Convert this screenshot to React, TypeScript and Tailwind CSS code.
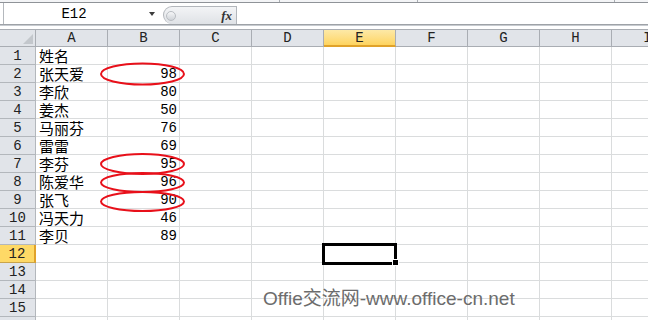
import React from "react";

type Row = { name?: string; score?: number };

const cols = ["A", "B", "C", "D", "E", "F", "G", "H", "I"];

const rows: Row[] = [
  { name: "姓名" },
  { name: "张天爱", score: 98 },
  { name: "李欣", score: 80 },
  { name: "姜杰", score: 50 },
  { name: "马丽芬", score: 76 },
  { name: "雷雷", score: 69 },
  { name: "李芬", score: 95 },
  { name: "陈爱华", score: 96 },
  { name: "张飞", score: 90 },
  { name: "冯天力", score: 46 },
  { name: "李贝", score: 89 },
  {},
  {},
  {},
  {},
  {},
];

const mono = { fontFamily: '"Liberation Mono", "Noto Sans CJK SC", monospace' };
const cjk = { fontFamily: '"Noto Sans CJK SC", "Liberation Sans", sans-serif' };

function FormulaBar() {
  return (
    <div className="flex h-[21px] items-stretch">
      {/* name box */}
      <div className="ml-[3px] flex w-[157px] items-center border-l border-[#b4b8bd]">
        <span className="w-[140px] text-center text-[14px] leading-none text-black" style={mono}>
          E12
        </span>
        <span className="ml-[5px] h-0 w-0 border-x-[3px] border-t-[4px] border-x-transparent border-t-[#3c3c3c]" />
      </div>
      {/* fx pill */}
      <div className="ml-[3px] mt-[3px] flex w-[74px] items-center rounded-l-full border-l border-t border-r border-[#b2b6bb] bg-gradient-to-b from-[#f3f4f6] to-[#dfe2e6]">
        <span className="ml-[2px] h-[10px] w-[10px] rounded-full border border-[#b9bdc2] bg-gradient-to-b from-[#f6f7f8] to-[#cfd3d8]" />
        <span
          className="ml-auto mr-[4px] text-[13px] font-bold italic leading-none text-[#333]"
          style={{ fontFamily: '"Liberation Serif", serif' }}
        >
          fx
        </span>
      </div>
      <div className="flex-1 bg-white" />
    </div>
  );
}

function Sheet() {
  return (
    <div>
      {/* column headers */}
      <div className="flex h-[18px] border-t border-[#a9adb3] bg-[#e1e4e9]">
        <div className="relative w-[36px] shrink-0 border-b border-r border-[#a9adb3]">
          <span className="absolute bottom-[2px] right-[2px] h-0 w-0 border-b-[10px] border-l-[10px] border-b-[#c3c7cc] border-l-transparent" />
        </div>
        {cols.map((c) =>
          c === "E" ? (
            <div
              key={c}
              className="flex w-[72px] shrink-0 items-center justify-center border-b-2 border-r border-b-[#e0a22a] border-r-[#a9adb3] bg-gradient-to-b from-[#fde9a6] to-[#fed45e] text-[14px] leading-none text-[#222]"
              style={mono}
            >
              {c}
            </div>
          ) : (
            <div
              key={c}
              className="flex w-[72px] shrink-0 items-center justify-center border-b border-r border-[#a9adb3] text-[14px] leading-none text-[#222]"
              style={mono}
            >
              {c}
            </div>
          )
        )}
      </div>

      {rows.map((r, i) => {
        const n = i + 1;
        const active = n === 12;
        return (
          <div key={n} className="flex h-[18px]">
            <div
              className={
                active
                  ? "flex w-[36px] shrink-0 items-center justify-center border-b border-r-2 border-b-[#c9a44a] border-r-[#e0a22a] bg-[#fed966] text-[14px] leading-none text-[#222]"
                  : "flex w-[36px] shrink-0 items-center justify-center border-b border-r border-[#b3b7bc] bg-[#e1e4e9] text-[14px] leading-none text-[#222]"
              }
              style={mono}
            >
              {n}
            </div>
            {cols.map((c) => (
              <div
                key={c}
                className="flex w-[72px] shrink-0 items-center border-b border-r border-[#dadcdd] text-black"
              >
                {c === "A" && r.name && (
                  <span className="pl-[3px] text-[15px] leading-none" style={cjk}>
                    {r.name}
                  </span>
                )}
                {c === "B" && r.score !== undefined && (
                  <span className="ml-auto pr-[2px] text-[14px] leading-none" style={mono}>
                    {r.score}
                  </span>
                )}
              </div>
            ))}
          </div>
        );
      })}
    </div>
  );
}

export default function App() {
  return (
    <div className="relative h-[320px] w-[648px] overflow-hidden bg-white">
      {/* ribbon bottom strip */}
      <div className="flex h-[2px] bg-[#f3f4f6]">
        <div className="w-[280px] border-r border-[#a9adb2]" />
        <div className="w-[138px] border-r border-[#a9adb2]" />
        <div className="w-[197px] border-r border-[#a9adb2]" />
      </div>
      <div className="h-px bg-[#8f9398]" />
      <FormulaBar />
      <div className="h-px bg-[#9ea2a7]" />
      <div className="h-px bg-[#c7cbd0]" />
      <div className="h-[3px] bg-white" />
      <Sheet />

      {/* selected cell E12 */}
      <div className="absolute left-[322px] top-[243px] h-[22px] w-[75px] border-[3px] border-black" />
      <div className="absolute left-[392px] top-[259px] h-[7px] w-[7px] border border-white bg-black" />

      {/* red circles */}
      <svg className="pointer-events-none absolute inset-0" width="648" height="320">
        <g fill="none" stroke="#e8101a" strokeWidth="2">
          <ellipse cx="142.5" cy="74" rx="41.5" ry="10.5" />
          <ellipse cx="142.5" cy="164" rx="41.5" ry="10" />
          <ellipse cx="142.5" cy="182.5" rx="41.5" ry="9.5" />
          <ellipse cx="142.5" cy="201.5" rx="41.5" ry="9.5" />
        </g>
      </svg>

      {/* watermark */}
      <div
        className="absolute left-[263px] top-[288px] text-[19px] leading-[21px] text-[#6c6c6c]"
        style={{ fontFamily: '"Liberation Sans", "Noto Sans CJK SC", sans-serif' }}
      >
        Offie交流网-www.office-cn.net
      </div>
    </div>
  );
}
